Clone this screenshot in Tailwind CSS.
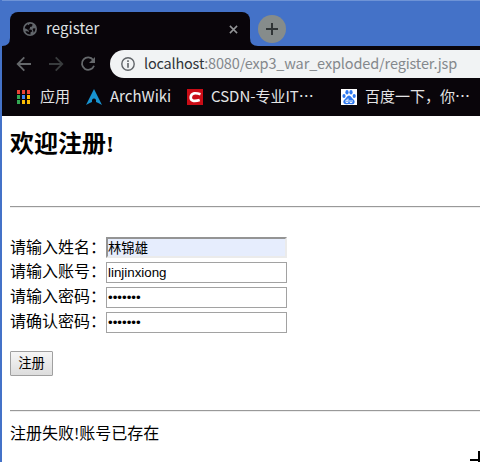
<!DOCTYPE html>
<html lang="zh-CN">
<head>
<meta charset="utf-8">
<title>register</title>
<script src="https://cdn.jsdelivr.net/npm/@tailwindcss/browser@4"></script>
</head>
<body class="w-[480px] h-[462px] overflow-hidden bg-[#4472c8]">
<div class="relative flex flex-col w-[480px] h-[462px] overflow-hidden border-l-2 border-[#4472c8] whitespace-nowrap">
  <header class="font-['Noto_Sans_CJK_SC',sans-serif] text-[15px] shrink-0">
    <div class="flex h-[46px] border-t border-[#6e93d6]">
      <svg class="w-2 h-2 self-end" viewBox="0 0 8 8"><path d="M0 8Q8 8 8 0V8Z" fill="#09050a"/></svg>
      <div class="mt-[11px] w-[240px] h-[34px] bg-[#09050a] rounded-t-[8px] flex items-center pl-[13px] pr-[12px]">
        <svg class="w-[14px] h-[14px]" viewBox="0 0 14 14"><circle cx="7" cy="7" r="7" fill="#62666b"/><path d="M7 1.8Q9 2 9.600 2.400L9 4.500L7 5V6.600L5.200 7.300L8.500 7.800L9.300 9.200L7.500 10.600V12.400Q4 12.500 2.300 9.200L4.500 9.300L5.800 10.200V8.700L3.800 7L1.600 6.300Q2 3.500 4.500 2.200L5.400 3.200Z M10.700 6.200L12.500 6.600Q12.400 9 10.700 10.800L10.200 8.500L9.500 7Z" fill="#09050a"/></svg>
        <span class="ml-[9px] text-[#dfe1e3] leading-[24px] -mt-[2px] tracking-[0.100px]">register</span>
        <svg class="ml-auto w-[9px] h-[9px]" viewBox="0 0 10 10"><path d="M1 1L9 9M9 1L1 9" stroke="#929496" stroke-width="1.700"/></svg>
      </div>
      <svg class="w-2 h-2 self-end" viewBox="0 0 8 8"><path d="M0 0Q0 8 8 8H0Z" fill="#09050a"/></svg>
      <svg class="w-7 h-7 mt-[14px]" viewBox="0 0 28 28"><circle cx="14" cy="14" r="14" fill="#868c8b"/><path d="M14 8V20M8 14H20" stroke="#303536" stroke-width="2"/></svg>
    </div>
    <div class="h-[70px] bg-[#09050a] pt-1">
      <div class="flex items-center h-7">
        <svg class="ml-[14px] w-4 h-4 shrink-0" viewBox="0 0 16 16" fill="none" stroke="#65686b" stroke-width="1.800"><path d="M15 8H2M8.300 1.300L1.700 8L8.300 14.700"/></svg>
        <svg class="ml-4 w-4 h-4 shrink-0" viewBox="0 0 16 16" fill="none" stroke="#393c3e" stroke-width="1.800"><path d="M1 8H14M7.700 1.300L14.300 8L7.700 14.700"/></svg>
        <svg class="ml-4 w-4 h-4 shrink-0" viewBox="0 0 16 16"><path d="M13.200 4A6.200 6.200 0 1 0 14 9.700" fill="none" stroke="#65686b" stroke-width="1.800"/><path d="M15 1V7H9Z" fill="#65686b"/></svg>
        <div class="ml-[14px] h-7 grow rounded-l-full bg-[#f1f3f4] flex items-center pl-[11px] text-[#84888c]">
          <svg class="w-[14px] h-[14px] shrink-0" viewBox="0 0 14 14"><circle cx="7" cy="7" r="6.200" fill="none" stroke="#606468" stroke-width="1.400"/><path d="M7 6V10.700M7 3.300V4.900" stroke="#606468" stroke-width="1.600"/></svg>
          <div class="ml-[9px] leading-[24px] -mt-[2px] text-[14.500px] tracking-[-0.140px]"><span class="text-[#303438] tracking-[-0.200px]">localhost</span>:8080/exp3_war_exploded/register.jsp</div>
        </div>
      </div>
      <nav class="flex items-center h-[38px] text-[#e4e4e5] text-[15px]">
        <svg class="ml-[15px] w-[13px] h-[14px] shrink-0" viewBox="0 0 13 14"><path fill="#ea4335" d="M0 0h3v4H0zM5 0h3v4H5zM10 0h3v4h-3z"/><path fill="#34a853" d="M0 5h3v4H0zM0 10h3v4H0z"/><path fill="#4285f4" d="M5 5h3v4H5z"/><path fill="#fbbc05" d="M5 10h3v4H5zM10 10h3v4h-3z"/><path fill="#fbbc05" d="M10 5h3v4h-3z"/></svg>
        <span class="ml-[10px] w-[46px] -mt-[2px]">应用</span>
        <svg class="w-4 h-4 shrink-0" viewBox="0 0 16 16"><path d="M8 0L0 16Q3.500 13.800 6 13Q5.500 9.800 8 9.500Q10.500 9.800 10 13Q12.500 13.800 16 16Z" fill="#1793d1"/></svg>
        <span class="ml-[8px] w-[77px] -mt-[2px]">ArchWiki</span>
        <svg class="w-4 h-4 shrink-0" viewBox="0 0 16 16"><path d="M0 0H16V16H0Z" fill="#ca0c16"/><path d="M13.500 5.200Q10 4 7.200 4.300Q4 5 3.700 8.200Q3.500 11.500 6.500 11.800Q9.500 12.100 12.700 11" fill="none" stroke="#fff" stroke-width="2.700"/></svg>
        <span class="ml-[8px] w-[130px] -mt-[2px]">CSDN-专业IT⋯</span>
        <svg class="w-4 h-4 shrink-0" viewBox="0 0 16 16"><path d="M0 0H16V16H0Z" fill="#fff"/><g fill="#2d78f0"><ellipse cx="3" cy="7" rx="1.600" ry="2.100"/><ellipse cx="6" cy="3.300" rx="1.600" ry="2.200"/><ellipse cx="10" cy="3.300" rx="1.600" ry="2.200"/><ellipse cx="13.200" cy="7" rx="1.600" ry="2.100"/><path d="M8 6.500C10 6.500 10.500 9 12.500 10.500C15 13 13 15.800 10.500 15.300Q8 14.800 5.500 15.300C2.500 15.700 1.200 12.700 3.500 10.600C5.500 9 6 6.500 8 6.500Z"/></g><path d="M7 9.500V13.500H5V11.200H7M9 11V13.500H11V11" fill="none" stroke="#fff" stroke-width=".9"/></svg>
        <span class="ml-[8px] -mt-[2px]">百度一下，你⋯</span>
      </nav>
    </div>
  </header>
  <main class="bg-white grow pl-2 font-['Liberation_Serif','Noto_Sans_CJK_SC',serif] text-[16px] text-black">
    <h2 class="text-[24px] font-bold leading-[36px] mt-[10px]">欢迎注册!</h2>
    <hr class="mt-[44px] h-[2px] border-0 border-t border-t-[#999] bg-[#eee]">
    <form class="mt-[28px]">
      <div class="flex flex-col gap-[2px]">
        <label class="flex items-center h-[23px]"><span class="w-[96px]">请输入姓名：</span><input class="w-[181px] h-[21px] border-2 border-t-[#949494] border-l-[#949494] border-r-[#ebebeb] border-b-[#ebebeb] bg-[#e6edfd] font-['Liberation_Sans','Noto_Sans_CJK_SC',sans-serif] text-[13.333px] leading-[17px]" value="林锦雄"></label>
        <label class="flex items-center h-[23px]"><span class="w-[96px] -mt-[2px]">请输入账号：</span><input class="w-[181px] h-[21px] px-[1px] border border-[#a2a2a2] font-['Liberation_Sans',sans-serif] text-[13.333px]" value="linjinxiong"></label>
        <label class="flex items-center h-[23px]"><span class="w-[96px] -mt-[2px]">请输入密码：</span><input type="password" class="w-[181px] h-[21px] px-[1px] border border-[#a2a2a2] font-['Liberation_Sans',sans-serif] text-[13.333px]" value="1234567"></label>
        <label class="flex items-center h-[23px]"><span class="w-[96px] -mt-[2px]">请确认密码：</span><input type="password" class="w-[181px] h-[21px] px-[1px] border border-[#a2a2a2] font-['Liberation_Sans',sans-serif] text-[13.333px]" value="1234567"></label>
      </div>
      <button type="button" class="block mt-[17px] w-[43px] h-[25px] rounded-[1px] border border-[#a0a0a0] bg-linear-to-b from-[#f6f6f6] to-[#dddddd] font-['Liberation_Sans','Noto_Sans_CJK_SC',sans-serif] text-[13.333px] leading-[20px]">注册</button>
    </form>
    <hr class="mt-[34px] h-[2px] border-0 border-t border-t-[#999] bg-[#eee]">
    <p class="mt-[10px] leading-[24px]">注册失败!账号已存在</p>
  </main>
  <svg class="absolute right-0 bottom-0 w-[10px] h-[11px]" viewBox="0 0 10 11"><path d="M8 0H10V11H8V10H0V8H8Z"/></svg>
</div>
</body>
</html>
